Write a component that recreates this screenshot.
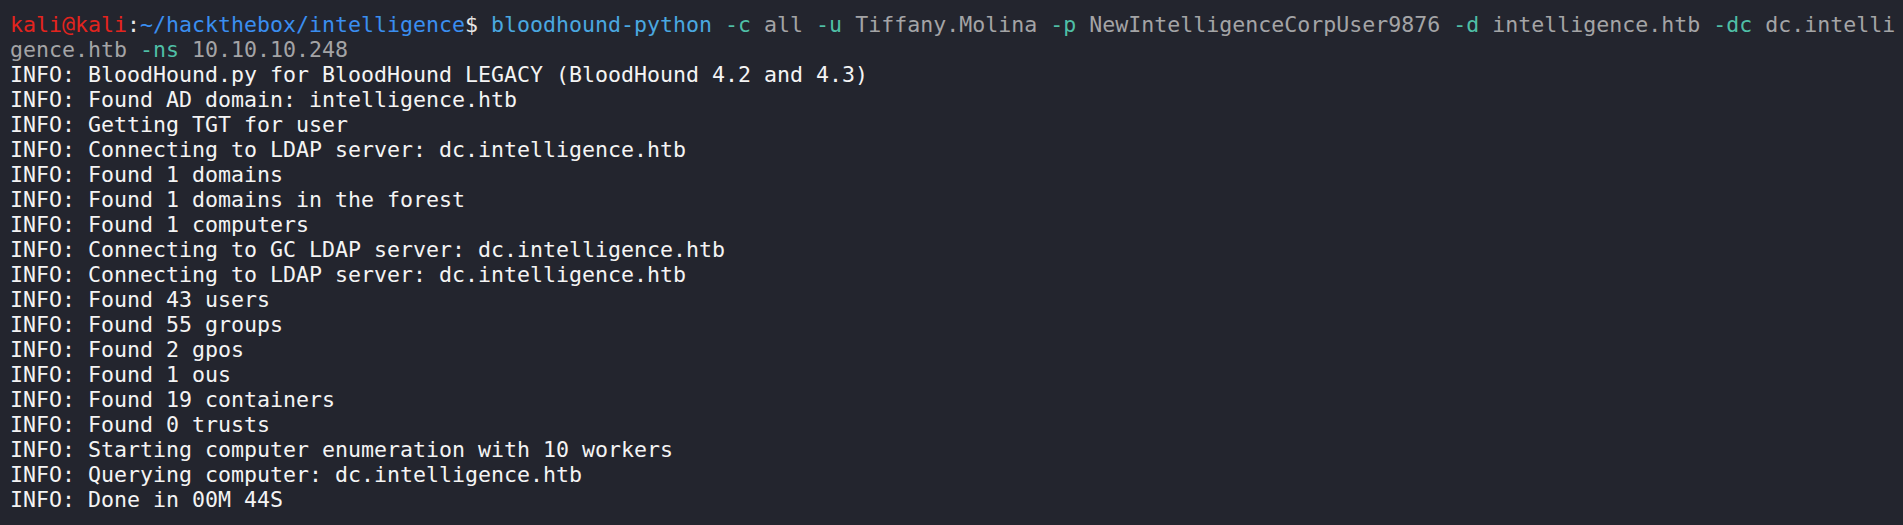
import React from 'react';

const output = [
    'INFO: BloodHound.py for BloodHound LEGACY (BloodHound 4.2 and 4.3)',
    'INFO: Found AD domain: intelligence.htb',
    'INFO: Getting TGT for user',
    'INFO: Connecting to LDAP server: dc.intelligence.htb',
    'INFO: Found 1 domains',
    'INFO: Found 1 domains in the forest',
    'INFO: Found 1 computers',
    'INFO: Connecting to GC LDAP server: dc.intelligence.htb',
    'INFO: Connecting to LDAP server: dc.intelligence.htb',
    'INFO: Found 43 users',
    'INFO: Found 55 groups',
    'INFO: Found 2 gpos',
    'INFO: Found 1 ous',
    'INFO: Found 19 containers',
    'INFO: Found 0 trusts',
    'INFO: Starting computer enumeration with 10 workers',
    'INFO: Querying computer: dc.intelligence.htb',
    'INFO: Done in 00M 44S',
];

export default function App() {
    return (
        <div className="w-[1903px] h-[525px] overflow-hidden bg-[#23252e] pl-[10px] pt-[12px] font-['DejaVu_Sans_Mono',monospace] text-[21.6px] leading-[25px] whitespace-pre text-[#f4f4f4]">
            <div>
                <span className="text-[#e3241e]">kali@kali</span>
                <span className="text-[#e6e6e6]">:</span>
                <span className="text-[#3a8ef0]">~/hackthebox/intelligence</span>
                <span className="text-[#e6e6e6]">$ </span>
                <span className="text-[#4aa8e0]">bloodhound-python</span>
                <span className="text-[#4fbfa6]"> -c</span>
                <span className="text-[#a4a4a6]"> all</span>
                <span className="text-[#4fbfa6]"> -u</span>
                <span className="text-[#a4a4a6]"> Tiffany.Molina</span>
                <span className="text-[#4fbfa6]"> -p</span>
                <span className="text-[#a4a4a6]"> NewIntelligenceCorpUser9876</span>
                <span className="text-[#4fbfa6]"> -d</span>
                <span className="text-[#a4a4a6]"> intelligence.htb</span>
                <span className="text-[#4fbfa6]"> -dc</span>
                <span className="text-[#a4a4a6]"> dc.intelli</span>
            </div>
            <div>
                <span className="text-[#a4a4a6]">gence.htb</span>
                <span className="text-[#4fbfa6]"> -ns</span>
                <span className="text-[#a4a4a6]"> 10.10.10.248</span>
            </div>
            {output.map((line) => (
                <div key={line}>{line}</div>
            ))}
        </div>
    );
}
